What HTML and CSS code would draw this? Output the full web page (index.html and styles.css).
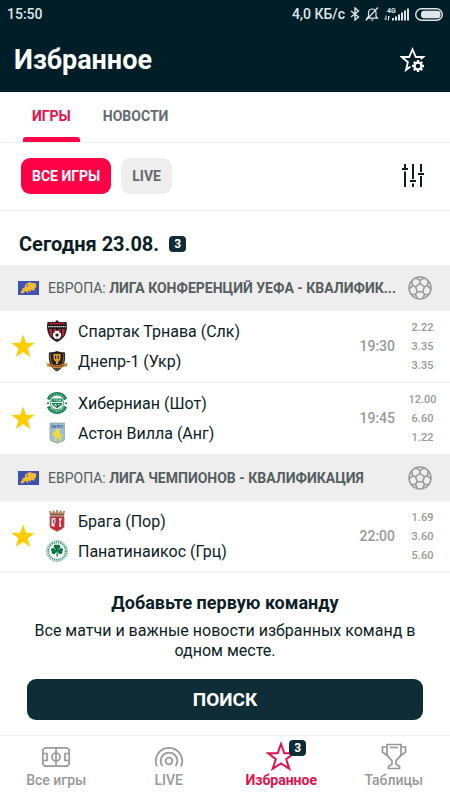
FILE: index.html
```html
<!DOCTYPE html>
<html lang="ru">

<head>
    <meta charset="UTF-8">
    <meta name="viewport" content="width=device-width, initial-scale=1.0">
    <title>Избранное</title>
    <link rel="stylesheet" href="styles.css">
</head>

<body>

    <!-- Shared icons -->
    <svg class="sprite" aria-hidden="true">
        <symbol id="star" viewBox="0 0 24 24">
            <path d="M12 .5l3 8.300 8.700.2-7 5.300 2.500 8.700L12 18l-7.200 5 2.500-8.700L.3 9l8.700-.2z" />
        </symbol>
        <symbol id="ball" viewBox="0 0 24 24">
            <g fill="none" stroke="#999" stroke-width="1.500">
                <circle cx="12" cy="12" r="11" />
                <path d="M12 7.500l4.400 3.200-1.700 5.100H9.300l-1.700-5.100z" />
                <path d="M12 7.500V4.300M16.400 10.700l3.100-1M14.700 15.800l1.900 2.700M9.300 15.800l-1.900 2.700M7.600 10.700l-3.100-1" />
                <path d="M7.600 1.900L12 4.300l4.400-2.400M20.200 4.600l-.7 5.100L23 13.200M21 18.400l-4.400.1-2.200 4.200M9.600 22.700l-2.200-4.200L3 18.400M1 13.200l3.500-3.500-.7-5.100" />
            </g>
        </symbol>
        <symbol id="europe" viewBox="0 0 21 14">
            <path fill="#3d51b5" d="M0 0h21v14H0z" />
            <path fill="#f4bd2f" d="M2.500 12l1-2.500 1.200-.5-.7-1.500 2-.6 1.300-1.400-.8-1 2.500-2.200L12 1l2 1 3.500.2.8 2-.4 2.400-1.600 1.200.6 1.500-2 .2-1-.8-1 .4-.4 2.200-1.300-1.400-1.200-.4-.5.8 1.500 1.600-2-.5-1.700-1.700-1.800 2.200-1.400.7z" />
            <path fill="#3d51b5" d="M8.500 5l1.200-1.700.5.4L9.300 6z" />
        </symbol>
    </svg>

    <header class="header">
        <div class="status-bar">
            <span>15:50</span>
            <div class="status-icons">
                <span>4,0 КБ/с</span>
                <svg width="10" height="14" viewBox="0 0 10 14" fill="none" stroke="#dfe5e8" stroke-width="1.400">
                    <path d="M1 4l7.500 6L5 13V1l3.500 3L1 10" />
                </svg>
                <svg width="14" height="14" viewBox="0 0 14 14" fill="none" stroke="#dfe5e8" stroke-width="1.200">
                    <path d="M2 11.200h10.500L11 9.500V6c0-2.500-1.500-4-3.700-4S3.500 3.500 3.500 6v3.500zM6 13h2.500M13 .5L.8 13.500" />
                </svg>
                <svg class="signal" width="26" height="15" viewBox="0 0 26 15">
                    <text x="3" y="6">4G</text>
                    <path fill="#dfe5e8" d="M8 11h2v2.500H8zM11 9.500h2v4h-2zM14 7.500h2v6h-2zM17 5.500h2v8h-2zM20 3.500h2v10h-2zM23 1.500h2v12h-2z" />
                    <path fill="none" stroke="#dfe5e8" d="M2 8.500v4.500l-1.500-1.500M4.500 13.500V9L6 10.500" />
                </svg>
                <svg width="28" height="13" viewBox="0 0 28 13">
                    <rect x=".7" y=".7" width="26.600" height="11.600" rx="5.800" fill="none" stroke="#dfe5e8" stroke-width="1.400" />
                    <rect x="6" y="2.800" width="19.500" height="7.400" rx="3" fill="#dfe5e8" />
                </svg>
            </div>
        </div>
        <div class="title-row">
            <h1>Избранное</h1>
            <button class="icon-btn" type="button" aria-label="Настроить избранное">
                <svg width="26" height="26" viewBox="0 0 26 26">
                    <path fill="none" stroke="#fff" stroke-width="1.800" d="M10.500 19.500L6 23l1.900-7.800L1.800 10h7.400l3.300-7.700L15.800 10h7.400l-2.400 2" />
                    <g stroke="#fff" fill="none">
                        <circle cx="18" cy="19" r="3.400" stroke-width="2.200" />
                        <path stroke-width="2.400" d="M18 13v2.200M18 22.800V25M12 19h2.200M21.800 19H24M13.800 14.800l1.500 1.500M20.700 21.700l1.500 1.500M13.800 23.200l1.500-1.500M20.700 16.300l1.500-1.500" />
                    </g>
                </svg>
            </button>
        </div>
    </header>

    <nav class="tabs">
        <a class="tab active" href="#games">ИГРЫ</a>
        <a class="tab" href="#news">НОВОСТИ</a>
    </nav>

    <div class="filters">
        <button class="chip active" type="button">ВСЕ ИГРЫ</button>
        <button class="chip" type="button">LIVE</button>
        <button class="icon-btn" type="button" aria-label="Фильтры">
            <svg width="24" height="24" viewBox="0 0 24 24" fill="none" stroke="#0b2029" stroke-width="2">
                <path d="M4 0v4M1 5h6M4 7.500V23M12 0v15M9 17h6M12 19.500V23M20 0v8M17 10h6M20 12v11" />
            </svg>
        </button>
    </div>

    <main id="games">
        <h2 class="date">Сегодня 23.08. <span class="badge">3</span></h2>

        <section>
            <h3 class="league">
                <svg class="flag"><use href="#europe" /></svg>
                <span class="league-name">ЕВРОПА: <b>ЛИГА КОНФЕРЕНЦИЙ УЕФА - КВАЛИФИК...</b></span>
                <svg class="ball"><use href="#ball" /></svg>
            </h3>

            <div class="match">
                <button class="fav" type="button" aria-label="Убрать из избранного"><svg><use href="#star" /></svg></button>
                <div class="teams">
                    <div class="team">
                        <svg class="crest" viewBox="0 0 22 22">
                            <path fill="#1d1a1e" d="M11 0l2 2h7.500l.5 4c-.2 8-3 13-10 16C4 19 1.200 14 1 6l.5-4H9z" />
                            <path fill="#c5203c" d="M3 9h3v9C4 15.500 3.200 12.500 3 9zM16 9h3c-.2 3.500-1 6.500-3 9zM7.500 9H10v3H7.500zM12 9h2.500v3H12zM3 2.800h16v1.500H3z" />
                            <path stroke="#ddd" stroke-width="1.200" stroke-dasharray="1.500 .6" d="M2 6.700h18" />
                            <circle cx="11" cy="15" r="4.200" fill="#fff" />
                            <path fill="#222" d="M11 13.200l1.800 1.300-.7 2.100H9.900l-.7-2.100zM7.500 12.500l1.500-.8-.5 1.600zM14.500 12.500l-1.500-.8.5 1.600zM10 18.500h2l-1 .8z" />
                        </svg>
                        <span>Спартак Трнава (Слк)</span>
                    </div>
                    <div class="team">
                        <svg class="crest" viewBox="0 0 22 22">
                            <path fill="#29211e" d="M11 1l3 1 5 .5c.8 9-1 15-8 19C4 17.500 2.200 11.500 3 2.500L8 2z" />
                            <path fill="none" stroke="#a88246" stroke-width=".8" d="M4.200 4C4 11 6 17 11 20c5-3 7-9 6.800-16" />
                            <path fill="#dca339" d="M7.500 4h7v4c0 2-1 3-2.500 3.500V14h-2v-2.500C8.500 11 7.500 10 7.500 8z" />
                            <path fill="#33251e" d="M9 5.500h1.200V9H9zM11.700 5.500h1.200V9h-1.200z" />
                            <path fill="#c88837" d="M0 13l4 .5c4 2 10 2 14 0l4-.5-1.500 2 1 1.500-4 .2c-4 2-9 2-13 0l-4-.2 1-1.500z" />
                            <path stroke="#4d3018" stroke-width="1.200" stroke-dasharray="1 .6" fill="none" d="M4 15c4 2 10 2 14 0" />
                        </svg>
                        <span>Днепр-1 (Укр)</span>
                    </div>
                </div>
                <time class="time">19:30</time>
                <div class="odds"><span>2.22</span><span>3.35</span><span>3.35</span></div>
            </div>

            <div class="match">
                <button class="fav" type="button" aria-label="Убрать из избранного"><svg><use href="#star" /></svg></button>
                <div class="teams">
                    <div class="team">
                        <svg class="crest" viewBox="0 0 22 22">
                            <path fill="none" stroke="#15814f" stroke-width="3.400" d="M2.500 7.500a9.200 9.200 0 0 1 17 0M2.500 14.500a9.200 9.200 0 0 0 17 0" />
                            <path fill="none" stroke="#d8eee1" stroke-dasharray="1 .9" d="M3.500 6a9.200 9.200 0 0 1 15 0M3.500 16a9.200 9.200 0 0 0 15 0" />
                            <path fill="none" stroke="#15814f" stroke-width=".8" d="M5.300 8a6.500 6.500 0 1 0 11.400 0" />
                            <path fill="#167e4e" d="M5.500 6.500h11l-.5 6-5 4-5-4zM1 10.500h2V12H1zM19 10.500h2V12h-2z" />
                            <path fill="none" stroke="#fff" stroke-width=".9" d="M5.500 10.500h11M7.500 8h2M12.500 9.500L14 7.500l1 2M8.500 12.500h1.500v2M12 12.500h1.500M11 7v2.500" />
                        </svg>
                        <span>Хиберниан (Шот)</span>
                    </div>
                    <div class="team">
                        <svg class="crest" viewBox="0 0 22 22">
                            <path fill="#99bddf" stroke="#8d9876" stroke-width=".6" d="M4 1h14.500v16c0 3-5 2.500-7.200 4.500C9 19.500 4 20 4 17z" />
                            <text class="crest-text" x="11.200" y="5.500">AVFC</text>
                            <path fill="#f1dc3b" d="M10 6.500l3 .5 1.500 2-1.500 1 2 2.500 2-.5-1 2.500-1.500.5 1 2-1 2-1.500-.2.300-2.300-2-1-1 1.500 1 2H8.500L8 17.500l1.500-2.500-.5-1.500-2.500 1-.5-1.300L8.500 12l-2.500-1 .5-1.300 2.500.3z" />
                        </svg>
                        <span>Астон Вилла (Анг)</span>
                    </div>
                </div>
                <time class="time">19:45</time>
                <div class="odds"><span>12.00</span><span>6.60</span><span>1.22</span></div>
            </div>
        </section>

        <section>
            <h3 class="league">
                <svg class="flag"><use href="#europe" /></svg>
                <span class="league-name">ЕВРОПА: <b>ЛИГА ЧЕМПИОНОВ - КВАЛИФИКАЦИЯ</b></span>
                <svg class="ball"><use href="#ball" /></svg>
            </h3>

            <div class="match">
                <button class="fav" type="button" aria-label="Убрать из избранного"><svg><use href="#star" /></svg></button>
                <div class="teams">
                    <div class="team">
                        <svg class="crest" viewBox="0 0 22 22">
                            <path fill="#a88a66" d="M3 1h2v1.500h1.500V.5h2v2H10V0h2v2.500h1.500v-2h2v2H17V1h2l-1 5H4z" />
                            <path stroke="#8b2c32" stroke-dasharray="1.200 .8" d="M4.500 4.300h13" />
                            <path fill="#c62638" stroke="#9b7b6c" stroke-width=".8" d="M4 6.500h14V16c0 3-4.500 3.500-7 5.500C8.500 19.500 4 19 4 16z" />
                            <path fill="#e8e3e2" d="M5.500 8h4v5h-1v4l-3-1z" />
                            <path fill="#496bb4" d="M6.800 9.500h1.600v3.500H6.800z" />
                            <path fill="#efe9e4" d="M13 8h2.500v2.500h-1l.8 6.500H13l.5-6.500H13z" />
                        </svg>
                        <span>Брага (Пор)</span>
                    </div>
                    <div class="team">
                        <svg class="crest" viewBox="0 0 22 22">
                            <circle cx="11" cy="11" r="10.500" fill="#fff" stroke="#68a98b" stroke-width=".7" />
                            <circle cx="11" cy="11" r="8.700" fill="none" stroke="#2d8a61" stroke-width="1.800" stroke-dasharray="1.300 .9" />
                            <g fill="#08733f">
                                <circle cx="9.700" cy="6.500" r="2" /><circle cx="12.300" cy="6.500" r="2" />
                                <circle cx="7" cy="10" r="2" /><circle cx="7.700" cy="12.200" r="2" />
                                <circle cx="15" cy="10" r="2" /><circle cx="14.300" cy="12.200" r="2" />
                                <path d="M8 6.500h6L12 10l3-1.500v5.500l-3.500-2.500.5 5h-1.500v-5L7 14V8.500l3 1.500z" />
                            </g>
                        </svg>
                        <span>Панатинаикос (Грц)</span>
                    </div>
                </div>
                <time class="time">22:00</time>
                <div class="odds"><span>1.69</span><span>3.60</span><span>5.60</span></div>
            </div>
        </section>

        <section class="add-team">
            <h2>Добавьте первую команду</h2>
            <p>Все матчи и важные новости избранных команд в одном месте.</p>
            <button class="search-btn" type="button">ПОИСК</button>
        </section>
    </main>

    <nav class="bottom-nav">
        <a href="#all">
            <svg width="30" height="30" viewBox="0 0 30 30" fill="none" stroke="#999" stroke-width="1.700">
                <path d="M4 6.800h22l2.200 2.200v14L26 25.200H4L1.800 23V9zM15 6.800v18.400M2 12.500h4v7H2M28 12.500h-4v7h4" />
                <circle cx="15" cy="16" r="4" />
            </svg>
            Все игры
        </a>
        <a href="#live">
            <svg width="30" height="30" viewBox="0 0 30 30" fill="none" stroke="#999" stroke-width="1.800">
                <circle cx="15" cy="20" r="3.300" />
                <path d="M3 25.500A13.200 13.200 0 1 1 27 25.500M8.500 25A8.300 8.300 0 1 1 21.500 25" />
            </svg>
            LIVE
        </a>
        <a class="active" href="#favorites">
            <span class="nav-icon">
                <svg width="30" height="30" viewBox="0 0 30 30" fill="none" stroke="#e3114d" stroke-width="2">
                    <path d="M15 3l3.300 9.300h9.500l-7.600 5.900 3.100 9.600-8.300-5.300-8.300 5.300 3.100-9.600-7.600-5.900h9.500z" />
                </svg>
                <span class="badge">3</span>
            </span>
            Избранное
        </a>
        <a href="#tables">
            <svg width="30" height="30" viewBox="0 0 30 30" fill="none" stroke="#999" stroke-width="1.700">
                <path d="M8 3.500h14v9c0 3-2 4.500-4 6l-1 1.500v3l3.500 2.500v2h-11v-2L13 23v-3l-1-1.500c-2-1.500-4-3-4-6zM8 6H3.500v5l6.500 5M22 6h4.500v5L20 16M11 6.500h8" />
            </svg>
            Таблицы
        </a>
    </nav>

</body>

</html>
```

FILE: styles.css
```css
* {
    box-sizing: border-box;
}

body {
    font-family: Roboto, "Noto Sans", sans-serif;
    background: #fff;
    color: #0b1e27;
    margin: 0;
    display: flex;
    flex-direction: column;
    min-height: 100vh;
}

h1,
h2,
h3,
p {
    margin: 0;
}

button {
    font-family: inherit;
    border: none;
    padding: 0;
    cursor: pointer;
}

a {
    text-decoration: none;
}

svg {
    display: block;
    flex-shrink: 0;
}

.sprite {
    position: absolute;
    width: 0;
    height: 0;
}

.icon-btn {
    background: none;
}

/* Header */
.header {
    background: #001e28;
    color: #fff;
}

.status-bar {
    display: flex;
    justify-content: space-between;
    align-items: center;
    height: 28px;
    padding: 0 7px;
    font-size: 14px;
    font-weight: 500;
    color: #dfe5e8;
}

.status-icons {
    display: flex;
    align-items: center;
    gap: 5px;
}

.signal text {
    font-size: 7px;
    font-weight: 700;
    fill: #dfe5e8;
}

.title-row {
    display: flex;
    justify-content: space-between;
    align-items: center;
    height: 64px;
    padding: 0 24px 0 14px;
}

.title-row h1 {
    font-size: 27px;
    font-weight: 700;
}

/* Tabs and filters */
.tabs {
    display: flex;
    gap: 14px;
    height: 51px;
    padding: 0 23px;
    border-bottom: 1px solid #eee;
}

.tab {
    display: flex;
    align-items: center;
    padding: 2px 9px 0;
    border-bottom: 4px solid transparent;
    font-size: 14px;
    font-weight: 700;
    color: #646b6e;
}

.tab.active {
    position: relative;
    color: #e3114d;
}

.tab.active::after {
    content: "";
    position: absolute;
    left: 0;
    right: 0;
    bottom: -4px;
    height: 5px;
    border-radius: 3px 3px 0 0;
    background: #ff0046;
}

.filters {
    display: flex;
    align-items: center;
    gap: 10px;
    height: 68px;
    padding: 0 25px 2px 21px;
    border-bottom: 1px solid #eee;
}

.filters .icon-btn {
    margin-left: auto;
}

.chip {
    height: 36px;
    padding: 0 11px;
    border-radius: 9px;
    background: #eee;
    color: #646b6e;
    font-size: 14px;
    font-weight: 700;
}

.chip.active {
    background: #ff0046;
    color: #fff;
}

/* Match list */
.date {
    display: flex;
    align-items: center;
    gap: 10px;
    height: 54px;
    padding: 12px 19px 0;
    font-size: 20px;
    font-weight: 700;
}

.badge {
    display: grid;
    place-items: center;
    width: 17px;
    height: 16px;
    border-radius: 4px;
    background: #0f2d37;
    color: #fff;
    font-size: 12px;
    font-weight: 700;
}

.league {
    display: flex;
    align-items: center;
    height: 46px;
    padding: 0 18px;
    background: #eee;
    color: #555e61;
    font-size: 14px;
    font-weight: 400;
}

.flag {
    width: 21px;
    height: 14px;
    margin-right: 9px;
}

.league-name {
    flex: 1;
    white-space: nowrap;
}

.ball {
    width: 24px;
    height: 24px;
}

.match {
    display: flex;
    align-items: center;
    height: 72px;
    border-bottom: 2px solid #f5f5f5;
}

.fav {
    display: grid;
    place-items: center;
    width: 46px;
    height: 60px;
    background: none;
}

.fav svg {
    width: 24px;
    height: 24px;
    fill: #ffcd00;
}

.teams {
    flex: 1;
}

.team {
    display: flex;
    align-items: center;
    gap: 10px;
    height: 30px;
    font-size: 16px;
}

.crest {
    width: 22px;
    height: 22px;
}

.crest-text {
    font-family: "Liberation Serif", serif;
    font-size: 5px;
    font-weight: 700;
    text-anchor: middle;
    fill: #28376a;
}

.time {
    color: #999;
    font-size: 14px;
    font-weight: 500;
}

.odds {
    display: grid;
    width: 55px;
    color: #999;
    font-size: 11px;
    font-weight: 500;
    line-height: 19px;
    text-align: center;
}

/* Add team */
.add-team {
    padding: 16px 27px 14px;
    text-align: center;
}

.add-team h2 {
    font-size: 18px;
    line-height: 28px;
}

.add-team p {
    margin-top: 4px;
    font-size: 16px;
    line-height: 20px;
}

.search-btn {
    width: 100%;
    height: 41px;
    margin-top: 18px;
    border-radius: 9px;
    background: #0f2d37;
    color: #fff;
    font-size: 19px;
    font-weight: 700;
}

/* Bottom navigation */
.bottom-nav {
    display: grid;
    grid-template-columns: repeat(4, 1fr);
    height: 65px;
    margin-top: auto;
    border-top: 1px solid #eee;
}

.bottom-nav a {
    display: flex;
    flex-direction: column;
    align-items: center;
    gap: 1px;
    padding-top: 5px;
    color: #999;
    font-size: 14px;
    font-weight: 500;
}

.bottom-nav a.active {
    color: #e3114d;
    font-weight: 700;
}

.nav-icon {
    position: relative;
}

.nav-icon .badge {
    position: absolute;
    top: -1px;
    right: -10px;
}
```
